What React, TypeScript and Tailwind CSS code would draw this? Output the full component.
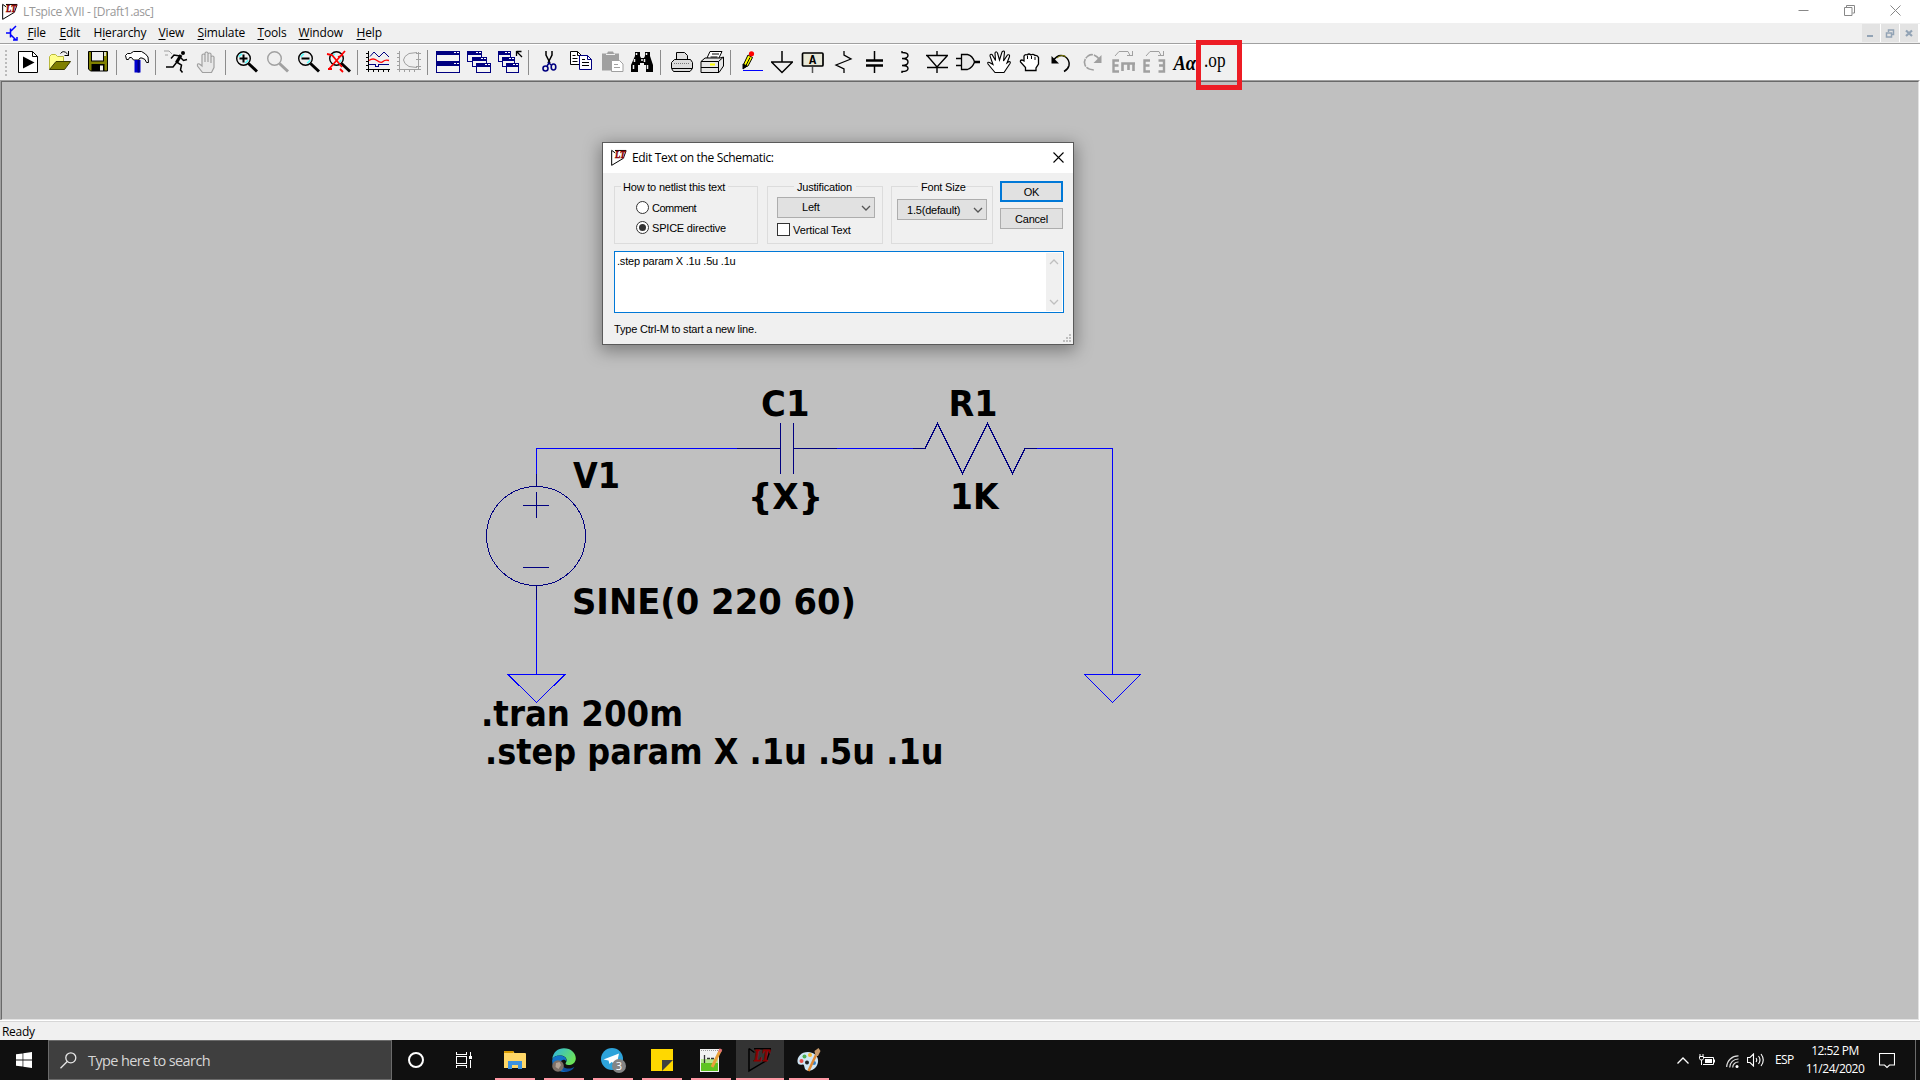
import React from "react";

type IconProps = { children: React.ReactNode };

function Ico({ children }: IconProps) {
  return (
    <svg width="24" height="24" viewBox="0 0 24 24" fill="none" stroke="#000" strokeWidth="1" className="block shrink-0 overflow-visible">
      {children}
    </svg>
  );
}

const G = "#a0a0a0";
const NAVY = "#000080";

function Lens({ c, children }: { c: string; children?: React.ReactNode }) {
  return (
    <Ico>
      <circle cx="9.5" cy="8.5" r="6.8" stroke={c} strokeWidth="1.4" fill="#efefef" />
      {c === "#000" && <path d="M5 7a5 5 0 0 1 3-3M14 10a5 5 0 0 1-3 3" stroke="#5ff" strokeWidth="1.5" />}
      <path d="M14.5 13.5L23 21.5" stroke={c} strokeWidth="3" />
      {children}
    </Ico>
  );
}

function Win({ x, y, w = 14, h = 10 }: { x: number; y: number; w?: number; h?: number }) {
  return (
    <g shapeRendering="crispEdges">
      <rect x={x + 0.5} y={y + 0.5} width={w} height={h} stroke={NAVY} fill="#f4f4f4" />
      <rect x={x} y={y} width={w + 1} height="4" fill={NAVY} stroke="none" />
      <path d={`M${x + w - 5} ${y + 1.5}h1.5M${x + w - 2} ${y + 1.5}h1.5`} stroke="#fff" />
    </g>
  );
}

const icons: (React.ReactNode | "|")[] = [
  <Ico>
    <path d="M2.5 1.5h14l5 5v16h-19z" fill="#fff" />
    <path d="M16.5 1.5v5h5" />
    <path d="M7 6.5L18.5 12.5L7 18.5z" fill="#000" stroke="none" />
  </Ico>,
  <Ico>
    <path d="M2.5 19V6.5l2-2h4l2 2h6v5" fill="#ffff8c" stroke="#b9b93c" />
    <path d="M2.5 19.5L9 11.5h14.5L17.5 19.5z" fill="#808000" stroke="#3a3a00" />
    <path d="M13.5 3.5q3-4 7 .5M21.5 1v5M17.5 5.5h4" />
  </Ico>,
  "|",
  <Ico>
    <path d="M2.5 1.5h19v19.5h-17l-2-2z" fill="#808000" />
    <rect x="5.5" y="1.5" width="12" height="9.5" fill="#efefef" />
    <path d="M19 2v4" stroke="#fff" strokeWidth="1.5" />
    <rect x="5.5" y="14" width="13" height="7" fill="#000" stroke="none" />
    <rect x="14" y="15.5" width="3" height="5" fill="#efefef" stroke="none" />
  </Ico>,
  "|",
  <Ico>
    <path d="M.5 5.500l2-2h3l3-2h8l4 2.500 2.500 3 .5 5.500h-2l-1.500-3-3-1.500h-2l-1.500 2h-5l-2-2.500h-2l-1 2h-2z" fill="#fff" />
    <rect x="9.500" y="10" width="6" height="12.500" fill="#0000d0" stroke="none" />
    <path d="M13.500 10v12.500" stroke={NAVY} strokeWidth="2" />
  </Ico>,
  "|",
  <Ico>
    <circle cx="19" cy="3" r="2" fill="#000" stroke="none" />
    <path d="M17 5L12.500 12.500" strokeWidth="3.200" />
    <path d="M16 6L10 5L7 8.500M16.500 7.500l3 3 3.500-1M12.500 12l5 3-1 5 2 2.500M12.500 12.500L9 17H2" strokeWidth="1.500" />
    <path d="M0 1h5l3 3M1 5h3" stroke={G} />
  </Ico>,
  <Ico>
    <path d="M7.500 22.500L2.500 16q-.5-3 2-2L7 16V5q1.500-2 3 0v7V3q1.500-2 3 0v9V4q1.500-2 3 0v9V7q1.500-2 3 0v10.500l-2.500 5z" fill="#e8e8e8" stroke={G} strokeWidth="1.200" />
  </Ico>,
  "|",
  <Lens c="#000">
    <path d="M5.500 8.500h8M9.500 4.500v8" strokeWidth="2" />
  </Lens>,
  <Lens c={G} />,
  <Lens c="#000">
    <path d="M5.500 8.500h8" strokeWidth="2" />
  </Lens>,
  <Lens c="#000">
    <path d="M0 4l5 1 10 12M18 1L2 19M1 19h4M11 7l5-2M13 19l3 3" stroke="#f00" strokeWidth="1.800" />
  </Lens>,
  "|",
  <Ico>
    <g shapeRendering="crispEdges">
      <path d="M2.500 1v21M0 19.500h24M0 3.500h2M0 7.500h2M0 11.500h2M0 15.500h2M7.500 20v2M12.500 20v2M17.500 20v2M22.500 20v2" />
      <path d="M3 14.500h6v2h3v-2h11" stroke={NAVY} />
    </g>
    <path d="M4 6.500l4-4.500 5 5 5-5 5 5" stroke={NAVY} />
    <path d="M3 10.500q4-3 8 0t6 1q2-2 6-1" stroke="#f00" strokeWidth="1.300" />
  </Ico>,
  <Ico>
    <path d="M2.500 1v21M0 19.500h24M0 3.500h2M0 7.500h2M0 11.500h2M0 15.500h2M7.500 20v2M12.500 20v2M17.500 20v2M21.500 2v17M19 3.500h5M19 9.500h5M19 16.500h5" stroke={G} shapeRendering="crispEdges" />
    <path d="M20 2.500L12 3.500 8 6.500 6.500 10 8 13.500 12 16.500 20 17.500" stroke={G} />
  </Ico>,
  "|",
  <Ico>
    <Win x={0} y={1} w={23} h={10} />
    <Win x={0} y={12} w={23} h={10} />
  </Ico>,
  <Ico>
    <Win x={0} y={1} />
    <Win x={5} y={7} h={9} />
    <Win x={9} y={13} h={9} />
  </Ico>,
  <Ico>
    <Win x={0} y={1} w={12} />
    <Win x={4} y={7} w={12} h={9} />
    <Win x={8} y={13} w={12} h={9} />
    <path d="M18.500 1.500h5M18.500 1v5M19 2l5 5" strokeWidth="1.300" />
  </Ico>,
  "|",
  <Ico>
    <path d="M9 1v4l4 8M15 1v4l-4 8" strokeWidth="1.500" />
    <circle cx="8.500" cy="18.500" r="2.500" stroke={NAVY} strokeWidth="1.600" />
    <ellipse cx="16.500" cy="17" rx="2.300" ry="3" stroke={NAVY} strokeWidth="1.600" />
    <path d="M10 16l2-3 2 2" stroke={NAVY} strokeWidth="1.500" />
  </Ico>,
  <Ico>
    <path d="M2.500 1.500h7l4 4v9h-11z" fill="#fff" />
    <path d="M9.500 1.500v4h4M4.500 5.500h3M4.500 8.500h5M4.500 11.500h5" />
    <path d="M11.500 5.500h8l4 4v10h-12z" fill="#fff" stroke={NAVY} />
    <path d="M19.500 5.500v4h4" stroke={NAVY} />
    <path d="M14 9.500h3M14 12.500h7M14 15.500h7" />
  </Ico>,
  <Ico>
    <path d="M3 3.500h5l1-2h5l1 2h5v17H3z" fill={G} stroke="none" />
    <path d="M7 4.500h9" stroke="#efefef" />
    <path d="M12.500 10.500h8l3.500 3.500v7.500h-11.500z" fill="#fff" stroke={G} />
    <path d="M15 14.500h4M15 17.500h6" stroke={G} />
  </Ico>,
  <Ico>
    <path d="M5 2h5v4l1 2h3l1-2V2h5v4l3 9v7h-7v-7h-2v-2h-4v2h-2v7H1v-7l4-9z" fill="#000" stroke="none" />
    <path d="M6.500 3v2M4.500 9v3M3.500 15v4M16.500 3v2M14.500 9v3M17.500 15v4M11 10h2" stroke="#efefef" strokeWidth="1.500" />
  </Ico>,
  "|",
  <Ico>
    <path d="M7.500 9V2.500h8l3 3V9" fill="#e0e0e0" />
    <path d="M5.500 9.500h16l2 3v6l-2.500 3H4.500l-2-3v-6z" fill="#dcdcdc" />
    <path d="M5 13.500h16" strokeDasharray="1 1" stroke="#777" />
    <path d="M3 18.500h20" />
  </Ico>,
  <Ico>
    <path d="M7 8L10 1.500h12L18 10z" fill="#fff" />
    <path d="M12 4h7M10.500 7h7" />
    <path d="M1 11.500L5 8h15l3.500-1v9l-4.500 6.500H1z" fill="#e6e6e6" />
    <path d="M1 11.500h17.500l4.500-4M1 17.500h18M18.500 11.500v11" />
    <path d="M10 14.500h5" stroke="#ff0" strokeWidth="2" />
  </Ico>,
  "|",
  <Ico>
    <path d="M4.500 14.500L9 5l4.500 2.500L9 16l-4 1.500z" fill="#ff0" />
    <path d="M11 7.500l-4 8" stroke="#000" />
    <circle cx="12.500" cy="3.800" r="2.600" fill="#f00" stroke="none" />
    <path d="M4 14v5l4-3z" fill="#000" />
    <path d="M4 20.500h20" stroke="#00f" shapeRendering="crispEdges" />
  </Ico>,
  <Ico>
    <path d="M12 1v11M1 12h22M1.500 12L12 22.500 22.500 12" strokeWidth="1.500" />
  </Ico>,
  <Ico>
    <rect x="1.500" y="3" width="20.500" height="13" rx="1" fill="#e8e8d8" strokeWidth="1.700" />
    <path d="M11.500 17v6" stroke="#555" strokeWidth="1.500" />
    <text x="8" y="13.500" fontSize="12" fontWeight="700" fontFamily="Liberation Mono, monospace" fill="#000" stroke="none">A</text>
  </Ico>,
  <Ico>
    <path d="M12 1v4l7 4L4 15l8 4v4" strokeWidth="1.300" />
  </Ico>,
  <Ico>
    <path d="M11.500 1v9M11.500 15v8" strokeWidth="1.500" />
    <path d="M3 10.500h17M3 15.500h17" strokeWidth="2.500" />
  </Ico>,
  <Ico>
    <path d="M8 1v1.500q6 0 6 3t-6 3q6 0 6 3.500t-6 3.500q6 0 6 3t-6 3V23" strokeWidth="1.400" />
  </Ico>,
  <Ico>
    <path d="M12 1v5M12 17v6M1 5.500h22M2 17.500h21M2.500 6L12 17 22 6" strokeWidth="1.400" />
  </Ico>,
  <Ico>
    <path d="M5.500 4.500h6q5 1 7 7.500-2 6-7 7.500h-6zM0 8.500h5M0 15.500h5" strokeWidth="1.300" fill="#e8e8e8" />
    <path d="M18 12h6" strokeWidth="2.500" />
  </Ico>,
  <Ico>
    <path d="M8 22.500L1 14q-1-2.500 1.500-1.500L6 14.500 3 6q0-2.500 2-1.500l3.500 6L8 3q1-2.500 2.500 0l2 7L15 2q2-2 2.500 0l-1 9 4-6q2.500-1 2 1.500L20 13l2-1.500q2 0 1 2L17 22.500z" fill="#fff" strokeWidth="1.100" />
  </Ico>,
  <Ico>
    <path d="M7.500 20.500v-3L2.500 12q-.5-2 1.500-2l2 1V6q1-2 3.500-1 1-2 3.500 0 2-1.500 4 .5 2.500-.5 3.500 2V14l-2.500 4v2.500z" fill="#fff" strokeWidth="1.300" />
    <path d="M9.500 6v3M13.500 6v3M17 7v3" />
  </Ico>,
  <Ico>
    <path d="M4 11Q9 3 16 6.500q5 3.500 4 9-1 4-5 6" strokeWidth="1.500" />
    <path d="M8 8q5-4.500 9-1" stroke="#808000" />
    <path d="M2.500 6v7.500H10z" fill="#000" stroke="none" />
  </Ico>,
  <Ico>
    <path d="M20 10Q14 2 8 6q-5 4-3 9 2 5 10 5" stroke={G} strokeWidth="1.600" strokeDasharray="8 1" />
    <path d="M21.500 5v8H13.500z" fill={G} stroke="none" />
  </Ico>,
  <Ico>
    <path d="M8 10.500H2.500v11H8M2 15.500h5.500" stroke={G} strokeWidth="2.400" />
    <path d="M24 13.500H11.500V21M17.500 13v7M22.500 13v8" stroke={G} strokeWidth="2.600" />
    <path d="M4 6l4-4.500h9l2 4M16 5.500h5.500M21.500 1v5" stroke={G} />
  </Ico>,
  <Ico>
    <path d="M8 10.500H2.500v11H8M2 15.500h5.500" stroke={G} strokeWidth="2.400" />
    <path d="M16.500 10.500h5.500v11h-5.500M17 15.500h5" stroke={G} strokeWidth="2.400" />
    <path d="M4 6l4-4.500h9l2 4M16 5.500h5.500M21.500 1v5" stroke={G} />
  </Ico>,
  <Ico>
    <text x="0.500" y="19.500" fontSize="20.500" fontWeight="700" fontStyle="italic" fontFamily="Liberation Serif, serif" fill="#000" stroke="none" textLength="22.500" lengthAdjust="spacingAndGlyphs">Aα</text>
  </Ico>,
  <Ico>
    <text x="0" y="17" fontSize="20" fontFamily="Liberation Serif, serif" fill="#000" stroke="none" textLength="21.500" lengthAdjust="spacingAndGlyphs">.op</text>
  </Ico>,
];

function Logo({ size }: { size: number }) {
  return (
    <svg width={size} height={size} viewBox="0 0 24 24" className="block shrink-0 overflow-visible">
      <path d="M1 .5V23L18.500 12.500 22.500 1.500M1 .5l5.500 4M6 .7h17" fill="none" stroke="#000" strokeWidth="1.500" />
      <text x="6" y="12.500" fontSize="16.500" fontWeight="700" fontStyle="italic" fontFamily="Liberation Serif, serif" fill="#8b0000" stroke="#8b0000" strokeWidth=".8" textLength="15.500" lengthAdjust="spacingAndGlyphs">LT</text>
    </svg>
  );
}

function Menu() {
  const items: [string, string, string, string][] = [
    ["", "F", "ile", "w-[32px]"],
    ["", "E", "dit", "w-[34px]"],
    ["H", "i", "erarchy", "w-[65px]"],
    ["", "V", "iew", "w-[39px]"],
    ["", "S", "imulate", "w-[60px]"],
    ["", "T", "ools", "w-[41px]"],
    ["", "W", "indow", "w-[58px]"],
    ["", "H", "elp", "w-[40px]"],
  ];
  return (
    <div className="flex h-[20px] shrink-0 items-center bg-[#f0f0f0] pl-[6px]">
      <svg width="12" height="17" viewBox="0 0 12 17" className="mr-[9.500px]" fill="none" stroke="#00f" strokeWidth="1.500">
        <path d="M0 8h4M4.500 3.500v9M5 6l5-5M5 10l5 5M7 15h4v-3" />
      </svg>
      {items.map(([a, u, b, w]) => (
        <span key={u + b} className={`${w} shrink-0 whitespace-nowrap text-[12px] leading-[18px] tracking-[-0.150px]`}>
          {a}
          <span className="underline underline-offset-2">{u}</span>
          {b}
        </span>
      ))}
      <div className="ml-auto flex gap-px bg-white">
        <MdiButton>
          <path d="M5 12h6" strokeWidth="2" />
        </MdiButton>
        <MdiButton>
          <path d="M5.500 9h5v4h-5zM7.500 8V6h5v4.500h-1.500" strokeWidth="1.500" />
        </MdiButton>
        <MdiButton>
          <path d="M6 6.500l6 5.500M12 6.500l-6 5.500" strokeWidth="2.200" />
        </MdiButton>
        <span className="w-px" />
      </div>
    </div>
  );
}

function MdiButton({ children }: IconProps) {
  return (
    <svg width="18" height="18" viewBox="0 0 18 18" fill="none" stroke="#92a3b5" className="block bg-[#e3e3e3]">
      {children}
    </svg>
  );
}

function Label({ x, y, w, children }: { x: number; y: number; w: number; children: string }) {
  return (
    <text x={x} y={y} textLength={w} lengthAdjust="spacingAndGlyphs">
      {children}
    </text>
  );
}

function Schematic() {
  return (
    <svg width="1916" height="937" viewBox="2 82 1916 937" fill="none" className="block">
      <g stroke="#00f" strokeWidth="1" shapeRendering="crispEdges">
        <path d="M536.500 474V448.500H737M837 448.500h76M1037 448.500h75.500V674M536.500 600V674" />
        <path d="M508 674.500h57L536.500 702.500zM1084.500 674.500h56L1112.500 702.500z" />
      </g>
      <g stroke={NAVY} strokeWidth="1" shapeRendering="crispEdges">
        <path d="M737 448.500h43.500M780.500 423v51M793.500 423v51M793.500 448.500H837M913 448.500h12L937.500 423.500 962.500 473.500 987.500 423.500 1012.500 473.500 1025 448.500h12" />
        <circle cx="536" cy="536" r="49.500" />
        <path d="M536.500 474v12M536.500 585v15M536.500 492v26M523 505.500h26M523 567.500h26" />
      </g>
      <g fill="#000" fontSize="35.500" fontWeight="700" fontFamily="DejaVu Sans, sans-serif">
        <Label x={761} y={415.500} w={48.500}>C1</Label>
        <Label x={573} y={488} w={47}>V1</Label>
        <Label x={748} y={508.500} w={75}>{"{X}"}</Label>
        <Label x={572} y={614} w={284}>SINE(0 220 60)</Label>
        <Label x={481} y={725.500} w={202}>.tran 200m</Label>
        <Label x={485} y={763.500} w={458.500}>.step param X .1u .5u .1u</Label>
        <Label x={948.500} y={415.500} w={49}>R1</Label>
        <Label x={950} y={508.500} w={48.500}>1K</Label>
      </g>
    </svg>
  );
}

function Chevron({ up = false, c = "#555" }: { up?: boolean; c?: string }) {
  return (
    <svg width="10" height="6" viewBox="0 0 10 6" fill="none" stroke={c} strokeWidth="1.300" className="block">
      <path d={up ? "M1 5l4-4 4 4" : "M1 1l4 4 4-4"} />
    </svg>
  );
}

function Dialog() {
  return (
    <div className="absolute left-[602px] top-[142px] flex h-[203px] w-[472px] flex-col border border-[#5a5a5a] bg-[#f0f0f0] font-['Liberation_Sans',sans-serif] text-[11px] leading-[13px] tracking-[-0.2px] shadow-[0_4px_16px_2px_rgba(0,0,0,0.35)]">
      <div className="flex h-[30px] shrink-0 items-center bg-white pl-[8px] pr-[9px] pb-px">
        <Logo size={16} />
        <span className="ml-[5px] font-['Open_Sans',sans-serif] text-[12px] tracking-[-0.350px]">Edit Text on the Schematic:</span>
        <svg width="11" height="11" viewBox="0 0 11 11" stroke="#000" strokeWidth="1.100" className="ml-auto">
          <path d="M.5.500l10 10M10.500.500l-10 10" />
        </svg>
      </div>
      <div className="flex h-[78px] shrink-0 pl-[11px] pt-[7px]">
        <div className="mt-[6px] h-[58px] w-[144px] border border-[#dcdcdc]">
          <div className="-mt-[6px] ml-[6px] w-[107px] bg-[#f0f0f0] pl-[2px] whitespace-nowrap">How to netlist this text</div>
          <div className="ml-[21px] mt-[7px] flex h-[13px] items-center gap-[3px]">
            <span className="size-[13px] rounded-full border border-[#333] bg-white" />
            <span className="pt-px tracking-[-0.500px]">Comment</span>
          </div>
          <div className="ml-[21px] mt-[7px] flex h-[13px] items-center gap-[3px]">
            <span className="flex size-[13px] items-center justify-center rounded-full border border-[#333] bg-white">
              <span className="size-[7px] rounded-full bg-[#333]" />
            </span>
            <span className="pt-px">SPICE directive</span>
          </div>
        </div>
        <div className="ml-[9px] mt-[6px] h-[58px] w-[116px] border border-[#dcdcdc]">
          <div className="-mt-[6px] ml-[26px] w-[62px] bg-[#f0f0f0] pl-[3px] whitespace-nowrap">Justification</div>
          <div className="ml-[9px] mt-[3px] flex h-[21px] w-[98px] items-center justify-between border border-[#adadad] bg-[#e1e1e1] pl-[24px] pr-[3px]">
            Left
            <Chevron />
          </div>
          <div className="ml-[9px] mt-[5px] flex h-[13px] items-center gap-[3px]">
            <span className="size-[13px] border border-[#333] bg-white" />
            <span className="pt-px tracking-[-0.100px]">Vertical Text</span>
          </div>
        </div>
        <div className="ml-[8px] mt-[6px] h-[58px] w-[102px] border border-[#dcdcdc]">
          <div className="-mt-[6px] ml-[26px] w-[48px] bg-[#f0f0f0] pl-[3px] whitespace-nowrap">Font Size</div>
          <div className="ml-[5px] mt-[5px] flex h-[21px] w-[90px] items-center justify-between border border-[#adadad] bg-[#e1e1e1] pl-[9px] pr-[3px]">
            <span className="pt-px">1.5(default)</span>
            <Chevron />
          </div>
        </div>
        <div className="ml-[7px] flex flex-col gap-[6px] pt-px">
          <div className="flex h-[21px] w-[63px] items-center justify-center border-2 border-[#0078d7] bg-[#e1e1e1] pt-px">OK</div>
          <div className="flex h-[21px] w-[63px] items-center justify-center border border-[#adadad] bg-[#e1e1e1] pt-px">Cancel</div>
        </div>
      </div>
      <div className="ml-[11px] flex h-[62px] w-[450px] shrink-0 justify-between border border-[#0078d7] bg-white p-px">
        <span className="pl-px pt-[2px]">.step param X .1u .5u .1u</span>
        <div className="flex w-[16px] flex-col items-center justify-between bg-[#f0f0f0] py-[6px]">
          <Chevron up c="#bfbfbf" />
          <Chevron c="#bfbfbf" />
        </div>
      </div>
      <div className="flex h-[31px] items-center justify-between pl-[11px] pr-[2px]">
        <span className="pt-[2px]">Type Ctrl-M to start a new line.</span>
        <svg width="8" height="8" viewBox="0 0 8 8" fill="#bfbfbf" className="mb-[2px] self-end">
          <path d="M6 0h2v2H6zM3 3h2v2H3zM6 3h2v2H6zM0 6h2v2H0zM3 6h2v2H3zM6 6h2v2H6z" />
        </svg>
      </div>
    </div>
  );
}

function Task({ children, active = false }: { children: React.ReactNode; active?: boolean }) {
  return (
    <div className={`relative mr-px flex h-[40px] w-[48px] items-center justify-center ${active ? "bg-[#333]" : ""}`}>
      {children}
      <span className={`absolute bottom-0 h-[2px] bg-[#ff98a4] ${active ? "w-[48px]" : "w-[40px]"}`} />
    </div>
  );
}

function Taskbar() {
  return (
    <div className="flex h-[40px] shrink-0 items-center bg-[#101010] text-white">
      <div className="flex w-[48px] justify-center">
        <svg width="16" height="16" viewBox="0 0 16 16" fill="#fff">
          <path d="M0 2.300L6.600 1.400v6.200H0zM7.300 1.300L16 0v7.600H7.300zM0 8.400h6.600v6.200L0 13.700zM7.300 8.400H16V16l-8.700-1.300z" />
        </svg>
      </div>
      <div className="flex h-[40px] w-[344px] items-center border border-[#6b6b6b] bg-[#3f3f3f]">
        <svg width="17" height="17" viewBox="0 0 17 17" fill="none" stroke="#e6e6e6" strokeWidth="1.300" className="ml-[11px]">
          <circle cx="10.800" cy="5.800" r="5" />
          <path d="M7.200 9.500L.5 16.200" />
        </svg>
        <span className="ml-[11px] pt-px text-[14.500px] tracking-[-0.600px] text-[#d6d6d6]">Type here to search</span>
      </div>
      <div className="flex w-[48px] justify-center">
        <span className="size-[16px] rounded-full border-2 border-white" />
      </div>
      <div className="flex w-[51px] items-center justify-center pr-[3px]">
        <svg width="16" height="16" viewBox="0 0 16 16" fill="none" stroke="#fff" strokeWidth="1" shapeRendering="crispEdges">
          <path d="M.5 0v2.500h10V0M.5 16v-2.500h10V16M.5 4.500h10v7H.5zM14.500 0v4M14.500 8v8" />
          <rect x="13" y="4" width="3" height="3" fill="#fff" stroke="none" />
        </svg>
      </div>
      <Task>
        <svg width="22" height="20" viewBox="0 0 22 20">
          <path d="M0 2q0-1 1-1h8l1.500 2H21q1 0 1 1v14H0z" fill="#ffd767" />
          <path d="M0 2q0-1 1-1h8.500v2H0z" fill="#d99b00" />
          <path d="M4 19v-8h14v8h-4v-4H8v4z" fill="#3d92e0" />
        </svg>
      </Task>
      <Task>
        <svg width="24" height="24" viewBox="0 0 24 24">
          <defs>
            <linearGradient id="edgeTop" x1="0" y1="0" x2="1" y2=".5">
              <stop offset="0" stopColor="#2bb4e8" />
              <stop offset="1" stopColor="#6be35a" />
            </linearGradient>
          </defs>
          <path d="M.3 11C1 4 6 .2 12 .2c7 0 12 5 11.800 10.500C23.500 15 20 17 16.500 17c-2.500 0-3.500-1-2.700-2.200C16 12 14 8 9 7.500 4 7.300 1.500 9 .3 11z" fill="url(#edgeTop)" />
          <path d="M.2 12C1 8.500 5 7 9 7.500c4 .5 6 3.500 5.300 6-1-2.500-5-2.500-6 1-.8 4 2.500 8.500 7.500 9C7 25.500-.5 20 .2 12z" fill="#1273c9" />
          <path d="M8.300 14.500c1 4.500 5.700 6.500 9.700 6 2-.3 3.500-1 4.500-1.800-1.700 3.200-5 5.200-9 5.200-4-1-6.500-5.500-5.200-9.400z" fill="#0f4f9f" />
          <circle cx="6" cy="18" r="5.800" fill="#7d7068" />
          <path d="M4 15l3.500-1 1.500 3-2.500 4-3-2z" fill="#b5a497" />
        </svg>
      </Task>
      <Task>
        <svg width="26" height="26" viewBox="0 0 26 26" className="mt-[2px]">
          <circle cx="12" cy="11" r="11" fill="#2ea3da" />
          <path d="M3.500 11.500L19 5.500 16.500 17l-5-3-2 2-1-3.500z" fill="#fff" />
          <circle cx="19" cy="18" r="7" fill="#858585" />
          <text x="15.800" y="22" fontSize="11" fontFamily="Open Sans, sans-serif" fill="#fff">3</text>
        </svg>
      </Task>
      <Task>
        <svg width="22" height="22" viewBox="0 0 22 22">
          <path d="M0 0h22v22H0z" fill="#ffd800" />
          <path d="M11 11h11L11 22z" fill="#404040" />
        </svg>
      </Task>
      <Task>
        <svg width="24" height="24" viewBox="0 0 24 24">
          <rect x="1" y="1" width="19" height="23" fill="#f2f2f2" />
          <rect x="2" y="12" width="17" height="11" fill="#5fc321" />
          <rect x="2" y="11" width="17" height="4" fill="#b5e88e" />
          <path d="M5.500 7v8M8 10.500h3M12 10.500h3" stroke="#333" strokeWidth="1.300" />
          <path d="M2 2.500h17" stroke="#999" strokeDasharray="1 1" />
          <path d="M13 19L21.500 2" stroke="#e9a13b" strokeWidth="3" />
          <path d="M20.500 4L22 1" stroke="#e57373" strokeWidth="3" />
        </svg>
      </Task>
      <Task active>
        <Logo size={24} />
      </Task>
      <Task>
        <svg width="24" height="24" viewBox="0 0 24 24">
          <path d="M11 4C4 4 0 9 .5 14c.5 3 3 3 5 2.500 2 0 1.500 2 2.500 4.500 2 3 8 2 11-2 4-5 3-14-8-15z" fill="#cfe6f5" />
          <circle cx="4.500" cy="13" r="2" fill="#e8504a" />
          <circle cx="7.500" cy="8.500" r="2" fill="#4caf50" />
          <circle cx="13" cy="7" r="2" fill="#f5b731" />
          <circle cx="10" cy="14.500" r="2" fill="#222" />
          <circle cx="17" cy="15" r="2" fill="#3b82c4" />
          <path d="M11.500 23L19 7" stroke="#e08a34" strokeWidth="2.500" />
          <path d="M18.500 8l-1-5 4-3 2 3-2.500 5z" fill="#c79a6b" />
        </svg>
      </Task>
      <div className="ml-auto flex h-full items-center">
        <svg width="12" height="7" viewBox="0 0 12 7" fill="none" stroke="#fff" strokeWidth="1.300">
          <path d="M.5 6.500L6 1l5.500 5.500" />
        </svg>
        <svg width="16" height="12" viewBox="0 0 16 12" fill="none" stroke="#fff" className="ml-[10px]">
          <path d="M4 3.500h10.500v7H4M15.500 5.500v3M2.500 6v5M1 0v2M4 0v2M.5 2.500h4v2l-1 1.500h-2l-1-1.500z" />
          <rect x="6" y="5" width="7" height="4" fill="#fff" stroke="none" />
        </svg>
        <svg width="13" height="13" viewBox="0 0 13 13" fill="none" stroke="#ddd" strokeWidth="1.200" className="ml-[11px] mt-[3px]">
          <path d="M.7 12A11.500 11.500 0 0 1 12.500.8M3.700 12.500A8.500 8.500 0 0 1 12.500 4M6.700 12.500A5.500 5.500 0 0 1 12.500 7" />
          <circle cx="11" cy="11.500" r="1.500" fill="#fff" stroke="none" />
        </svg>
        <svg width="17" height="14" viewBox="0 0 17 14" fill="none" stroke="#fff" strokeWidth="1.100" className="ml-[8px]">
          <path d="M.5 4.500h2.500L6.500 1v12L3 9.500H.500zM9 5q1.500 2 0 4M11.500 3q3 4 0 8M14 1q4.500 6 0 12" />
        </svg>
        <span className="ml-[11px] w-[24px] text-[12px] tracking-[-0.600px]">ESP</span>
        <div className="flex w-[72px] flex-col items-center text-[12px] leading-[18px] tracking-[-0.500px]">
          <span>12:52 PM</span>
          <span>11/24/2020</span>
        </div>
        <svg width="16" height="17" viewBox="0 0 16 17" fill="none" stroke="#fff" strokeWidth="1.100" className="ml-[8px]">
          <path d="M.5 1.500h15v11.500h-5L8 15.500 5.500 13h-5z" />
        </svg>
        <span className="ml-[20px] mr-[4px] h-[40px] w-px bg-[#6b6b6b]" />
      </div>
    </div>
  );
}

export default function App() {
  return (
    <div className="relative flex h-[1080px] w-[1920px] flex-col overflow-hidden bg-[#f0f0f0] font-['Open_Sans',sans-serif] text-black">
      <div className="flex h-[23px] shrink-0 items-center bg-white pl-[2px]">
        <Logo size={16} />
        <span className="ml-[5px] text-[12px] tracking-[-0.350px] text-[#999]">LTspice XVII - [Draft1.asc]</span>
        <div className="ml-auto flex items-center gap-[35px] pr-[19px]">
          <svg width="11" height="11" viewBox="0 0 11 11" stroke="#888" fill="none">
            <path d="M.5 4.500h10" />
          </svg>
          <svg width="11" height="11" viewBox="0 0 11 11" stroke="#888" fill="none" className="-mt-[2px]">
            <path d="M.5 2.500h7.500v8H.500zM2.500 2.500v-2h8v7.500h-2" />
          </svg>
          <svg width="11" height="11" viewBox="0 0 11 11" stroke="#888" fill="none" className="-mt-[2px]">
            <path d="M.5.500l10 10M10.500.500l-10 10" />
          </svg>
        </div>
      </div>
      <Menu />
      <div className="h-px shrink-0 bg-[#a0a0a0]" />
      <div className="flex h-[36px] shrink-0 bg-white">
        <div className="flex w-[1239px] items-start border-t border-white bg-[#f0f0f0] pl-[5px] pt-[5px]">
          <div className="mr-[5px] h-[26px] w-[2px] bg-[repeating-linear-gradient(#bbb_0_2px,transparent_2px_4px)]" />
          {icons.map((ic, i) =>
            ic === "|" ? (
              <div key={i} className="flex w-[8px] shrink-0 pl-[3px]">
                <span className="h-[25px] w-px bg-[#8c8c8c]" />
              </div>
            ) : (
              <div key={i} className="flex w-[31px] shrink-0 pl-[4px]">
                {ic}
              </div>
            ),
          )}
        </div>
      </div>
      <div className="h-[940px] shrink-0 border-l border-r border-t border-l-[#a0a0a0] border-r-white border-t-[#a0a0a0]">
        <div className="h-[939px] border border-b-[#e3e3e3] border-l-[#696969] border-r-[#e3e3e3] border-t-[#696969] bg-[#c0c0c0]">
          <Schematic />
        </div>
      </div>
      <div className="h-px shrink-0 bg-white" />
      <div className="flex h-[19px] shrink-0 items-center border-t border-[#d7d7d7] bg-[#f0f0f0] pl-[2px] pt-[2px] text-[12px] leading-[16px] tracking-[-0.300px]">Ready</div>
      <Taskbar />
      <Dialog />
      <div className="absolute left-[1196px] top-[40px] h-[50px] w-[46px] border-5 border-[#ed1c24]" />
    </div>
  );
}
